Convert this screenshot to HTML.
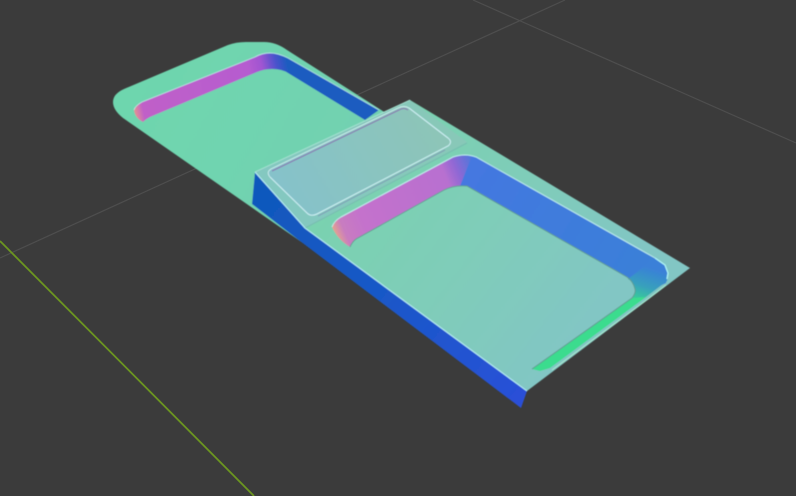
<!DOCTYPE html>
<html><head><meta charset="utf-8"><style>html,body{margin:0;padding:0;background:#3b3b3b;width:796px;height:496px;overflow:hidden}svg{display:block}</style></head><body>
<svg width="796" height="496" viewBox="0 0 796 496" xmlns="http://www.w3.org/2000/svg">
<defs>
<linearGradient id="plate" gradientUnits="userSpaceOnUse" x1="150" y1="60" x2="650" y2="340"><stop offset="0" stop-color="#6ed6ae"/><stop offset=".5" stop-color="#74d0b2"/><stop offset="1" stop-color="#82c8c0"/></linearGradient>
<linearGradient id="low" gradientUnits="userSpaceOnUse" x1="340" y1="190" x2="560" y2="360"><stop offset="0" stop-color="#7ad2b0"/><stop offset=".55" stop-color="#80ccba"/><stop offset="1" stop-color="#82c6c4"/></linearGradient>
<linearGradient id="pur1" gradientUnits="userSpaceOnUse" x1="135" y1="110" x2="290" y2="75"><stop offset="0" stop-color="#e08c98"/><stop offset=".05" stop-color="#c060c8"/><stop offset=".75" stop-color="#b65cd0"/><stop offset=".84" stop-color="#a055d2"/><stop offset=".93" stop-color="#4a52cc"/><stop offset="1" stop-color="#1c5cc0"/></linearGradient>
<linearGradient id="pur2" gradientUnits="userSpaceOnUse" x1="334" y1="235" x2="482" y2="172"><stop offset="0" stop-color="#e8a888"/><stop offset=".07" stop-color="#c87cc0"/><stop offset=".2" stop-color="#c472cc"/><stop offset=".78" stop-color="#b870d0"/><stop offset=".86" stop-color="#9068d4"/><stop offset=".98" stop-color="#4c78dc"/><stop offset="1" stop-color="#4478dc"/></linearGradient>
<linearGradient id="blue2" gradientUnits="userSpaceOnUse" x1="480" y1="170" x2="650" y2="270"><stop offset="0" stop-color="#4478e0"/><stop offset="1" stop-color="#3a80d8"/></linearGradient>
<linearGradient id="corner" gradientUnits="userSpaceOnUse" x1="646" y1="266" x2="634" y2="304"><stop offset="0" stop-color="#3a80d8"/><stop offset=".5" stop-color="#38a0bc"/><stop offset="1" stop-color="#3adc8c"/></linearGradient>
<linearGradient id="side" gradientUnits="userSpaceOnUse" x1="255" y1="190" x2="525" y2="400"><stop offset="0" stop-color="#1058bc"/><stop offset=".5" stop-color="#1a58c8"/><stop offset="1" stop-color="#2a50d8"/></linearGradient>
<linearGradient id="ramp" gradientUnits="userSpaceOnUse" x1="290" y1="210" x2="440" y2="120"><stop offset="0" stop-color="#84c8c0"/><stop offset="1" stop-color="#88c8b8"/></linearGradient>
<linearGradient id="panel" gradientUnits="userSpaceOnUse" x1="290" y1="205" x2="430" y2="125"><stop offset="0" stop-color="#86c2ca"/><stop offset="1" stop-color="#8dc5b8"/></linearGradient>
<filter id="b"><feGaussianBlur stdDeviation=".45"/></filter>
</defs>
<rect width="796" height="496" fill="#3b3b3b"/>
<g stroke="#4e4e4e" stroke-width="1.2" fill="none">
<line x1="0" y1="258" x2="565" y2="0"/>
<line x1="473" y1="0" x2="796" y2="143"/>
</g>
<line x1="0" y1="241" x2="254" y2="496" stroke="#6c9620" stroke-width="1.8"/>
<g filter="url(#b)">
<!-- upper plate -->
<path d="M113 102Q113 94 124 89L228 45Q236 42 246 42L264 42Q276 42 287 50L400 122L330 260L300 241L123 118Q113 110 113 102Z" fill="url(#plate)"/>
<!-- upper recess wall -->
<path d="M134 110Q135 106 142 102L255 57Q262 53 270 53Q278 53 288 58L379 110L365 120L288 73Q282 69 272 69Q264 69 257 72L150 117Q146 119 143 122Q135 118 134 110Z" fill="url(#pur1)"/>
<path d="M134 110Q135 106 142 102L255 57Q262 53 270 53Q278 53 288 58L379 110" fill="none" stroke="#c8f0f0" stroke-width=".9" opacity=".75"/>
<!-- blue side -->
<path d="M255 172L252 204L296 238L521 408L527 391L305 228Z" fill="url(#side)"/>
<!-- lower plate and ramp -->
<path d="M305 228L410 100L690 268L527 391Z" fill="url(#low)"/>
<path d="M255 172L410 100L467 142L305 228Z" fill="url(#ramp)"/>
<path d="M305 228L467 143" fill="none" stroke="#78bdb0" stroke-width="1"/>
<!-- lower recess walls -->
<path d="M332 227Q334 221 341 217L453 157Q465 153 476 157L500 170L500 205L467 186Q454 185 444 190L356 239Q352 242 350 247Q338 240 332 227Z" fill="url(#pur2)"/>
<path d="M472 156Q474 156 476 157L655 258L665 265L668 273L666 283L634 298Q636 293 635 289Q633 281 627 277L467 186Q464 186 460 186Z" fill="url(#blue2)"/>
<path d="M628 279L656 258L665 265L668 273L667 281L642 300L632 298Q636 293 635 289Q633 281 628 279Z" fill="url(#corner)"/>
<path d="M646 297L550 368L540 371L532 369L632 298Z" fill="#3adc8e"/>
<path d="M552 370L648 299L666 285" stroke="#a8e8cc" stroke-width="1" fill="none"/>
<path d="M532 369L632 298Q636 293 635 289Q633 281 627 277L467 186Q454 185 444 190L356 239Q352 242 350 247" fill="none" stroke="#5f9a90" stroke-width=".9"/>
<path d="M332 227Q334 221 341 217L453 157Q465 153 476 157L655 258" fill="none" stroke="#c8f4f4" stroke-width="1" opacity=".85"/>
<path d="M655 258L665 265L668 273L667 279" fill="none" stroke="#b0f6f8" stroke-width="1.2"/>
<!-- panel -->
<path d="M271 169L398 108Q404 105 409 108L448 138Q453 142 448 146L317 214Q311 217 307 213L270 177Q266 172 271 169Z" fill="url(#panel)"/>
<path d="M270 177Q266 172 271 169L398 108Q404 105 409 108L448 138" fill="none" stroke="#cfeef0" stroke-width=".9"/>
<path d="M272 171L399 110Q404 107 408 110" fill="none" stroke="#8a70b0" stroke-width="1"/>
<path d="M409 108L448 138Q453 142 448 146L317 214Q311 217 307 213L270 177" fill="none" stroke="#cdeff4" stroke-width="1"/>
<path d="M445 150L318 216" fill="none" stroke="#7c7cb0" stroke-width=".8" opacity=".7"/>
<!-- highlights -->
<path d="M255 172L305 228L527 391" fill="none" stroke="#b8f0f8" stroke-width="1"/>
<path d="M255 172L410 100" fill="none" stroke="#a8e4d4" stroke-width=".9"/>
</g>
</svg>
</body></html>
